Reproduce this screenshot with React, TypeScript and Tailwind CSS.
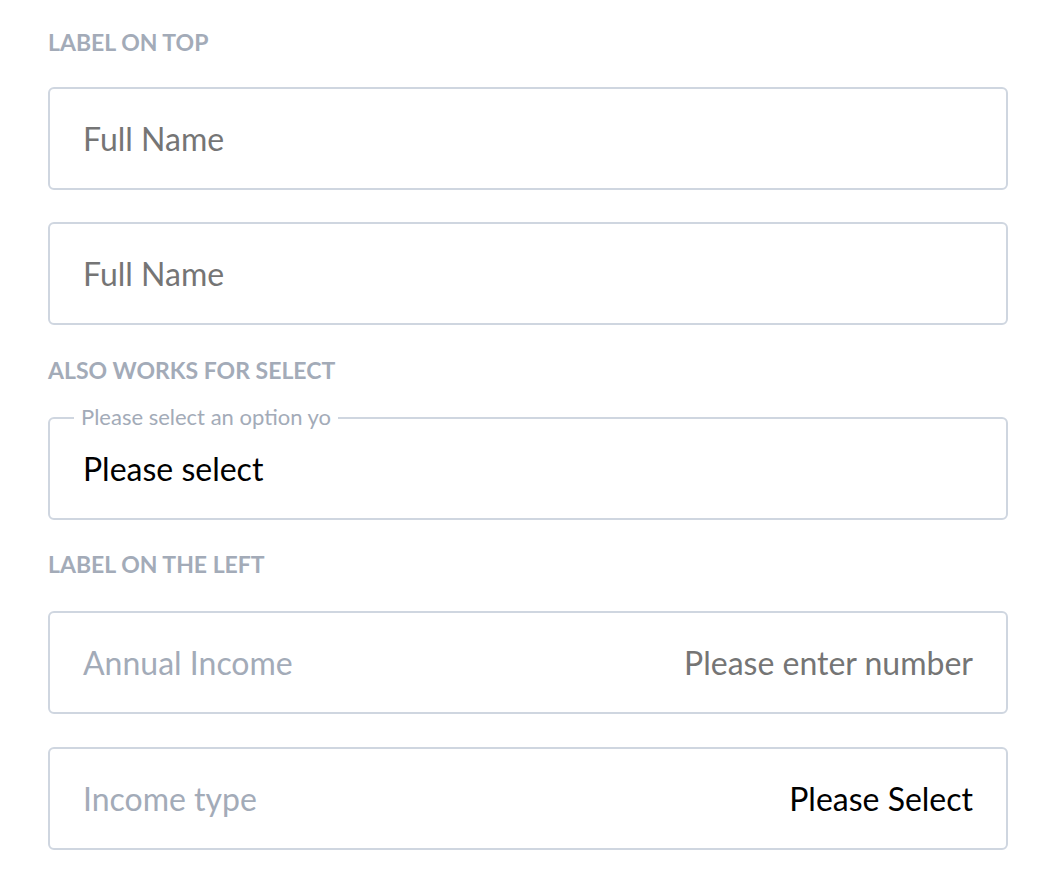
const labelClass =
  "m-0 mb-8 text-[23px] font-bold uppercase leading-[26px] text-[#a3abb8]";

const boxClass =
  "flex h-[103px] w-[960px] items-center rounded-[6px] border-2 border-[#cfd6e0] bg-white px-[33px] text-[32px] leading-none";

function TopInput({ placeholder }: { placeholder: string }) {
  return (
    <div className={boxClass}>
      <input
        className="w-full bg-transparent text-[#757575] outline-none placeholder:text-[#757575]"
        placeholder={placeholder}
        type="text"
      />
    </div>
  );
}

function OutlinedSelect({ legend, value }: { legend: string; value: string }) {
  return (
    <div className={`relative ${boxClass}`}>
      <span className="absolute -top-[14px] left-[24px] bg-white px-[7px] text-[22px] leading-[24px] text-[#a3abb8]">
        {legend}
      </span>
      <span className="text-black">{value}</span>
    </div>
  );
}

function LeftField({
  label,
  value,
  isPlaceholder
}: {
  isPlaceholder: boolean;
  label: string;
  value: string;
}) {
  return (
    <div className={`${boxClass} justify-between`}>
      <span className="text-[#a3abb8]">{label}</span>
      <span className={isPlaceholder ? "text-[#757575]" : "text-black"}>{value}</span>
    </div>
  );
}

export default function App() {
  return (
    <div
      className="min-h-[888px] bg-white pt-[29px] pl-[48px]"
      style={{ fontFamily: "Lato, 'Open Sans', sans-serif" }}
    >
      <p className={labelClass}>Label on top</p>
      <div className="flex flex-col gap-8">
        <TopInput placeholder="Full Name" />
        <TopInput placeholder="Full Name" />
      </div>

      <p className={`${labelClass} mt-8 !mb-[34px]`}>Also works for select</p>
      <OutlinedSelect legend="Please select an option yo" value="Please select" />

      <p className={`${labelClass} mt-[31px] !mb-[34px]`}>Label on the left</p>
      <div className="flex flex-col gap-[33px]">
        <LeftField isPlaceholder label="Annual Income" value="Please enter number" />
        <LeftField isPlaceholder={false} label="Income type" value="Please Select" />
      </div>
    </div>
  );
}
